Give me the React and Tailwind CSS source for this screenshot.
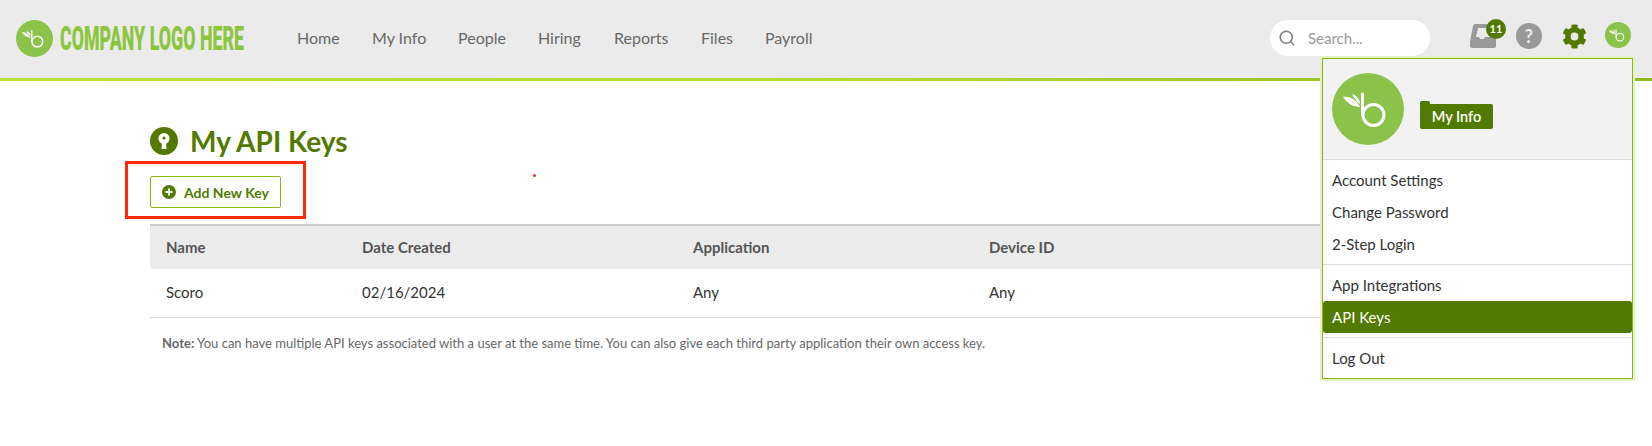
import React from 'react';
import { Search } from 'lucide-react';

const navLinks = [
  { label: 'Home', width: 'w-[75px]' },
  { label: 'My Info', width: 'w-[86px]' },
  { label: 'People', width: 'w-[80px]' },
  { label: 'Hiring', width: 'w-[76px]' },
  { label: 'Reports', width: 'w-[87px]' },
  { label: 'Files', width: 'w-[64px]' },
  { label: 'Payroll', width: 'w-[70px]' },
];

const BambooMark = ({ className }) => (
  <svg viewBox="0 0 72 72" className={className}>
    <circle cx="36" cy="36" r="36" fill="#8bc34a" />
    <path d="M30.5 21 V42" stroke="#fff" strokeWidth="3" strokeLinecap="round" fill="none" />
    <circle cx="41.5" cy="42" r="10.5" stroke="#fff" strokeWidth="3" fill="none" />
    <path d="M11 24 C17 23 24 26 28 34 C21 34 15 30 11 24 Z" fill="#fff" />
    <path d="M20 21 C24 22 28 26 28 31 C25 29 22 25 20 21 Z" fill="#fff" />
  </svg>
);

const Gear = () => (
  <svg viewBox="0 0 512 512" className="w-[25px] h-[25px]" fill="#527a00">
    <path d="M487 316l-42-25a190 190 0 000-70l42-25c5-3 7-9 5-14-11-35-30-67-54-93-4-4-10-5-15-2l-42 24a187 187 0 00-61-35V28c0-6-4-11-9-12-37-8-74-8-109 0-5 1-9 6-9 12v48a193 193 0 00-61 35L90 87c-5-3-11-2-15 2-24 26-43 58-54 93-2 5 0 11 5 14l42 25a190 190 0 000 70l-42 25c-5 3-7 9-5 14 11 35 30 67 54 93 4 4 10 5 15 2l42-24a187 187 0 0061 35v48c0 6 4 11 9 12 37 8 74 8 109 0 5-1 9-6 9-12v-48a193 193 0 0061-35l42 24c5 3 11 2 15-2 24-26 43-58 54-93 2-5 0-11-5-14zM256 336a80 80 0 110-160 80 80 0 010 160z" />
  </svg>
);

const MenuItem = ({ children, active }) => (
  <div
    className={`h-[32px] flex items-center pl-[9px] text-[15px] ${
      active ? 'bg-[#527a00] text-white rounded-[3px]' : 'text-[#333333]'
    }`}
  >
    {children}
  </div>
);

const App = () => {
  return (
    <div className="relative w-[1652px] h-[446px] overflow-hidden bg-white font-['Lato',sans-serif]">
      {/* Top bar */}
      <header className="h-[78px] bg-[#ebebeb] flex items-start">
        <div className="ml-[16px] mt-[20px] w-[281px] flex items-center shrink-0">
          <BambooMark className="w-[37px] h-[37px] shrink-0" />
          <span className="ml-[7px] text-[33px] leading-[37px] font-black text-[#8cc63f] font-['Roboto',sans-serif] whitespace-nowrap origin-left scale-x-[0.54]">
            COMPANY LOGO HERE
          </span>
        </div>
        <nav className="flex mt-[27px] text-[16px] leading-[22px] text-[#686868]">
          {navLinks.map((link) => (
            <span key={link.label} className={`${link.width} whitespace-nowrap`}>
              {link.label}
            </span>
          ))}
        </nav>
        <div className="ml-auto flex items-start">
          <div className="mt-[20px] w-[160px] h-[36px] bg-white rounded-full flex items-center pl-[8px] text-[15px] text-[#999999]">
            <Search size={18} strokeWidth={2.2} className="text-[#808080]" />
            <span className="ml-[12px]">Search...</span>
          </div>
          <div className="relative ml-[40px] mt-[24px] w-[26px] h-[24px]">
            <svg viewBox="0 0 26 24" className="w-[26px] h-[24px]" fill="#999999">
              <path d="M5 0 H17 V4 H8 L6 13 H9 C10 16 14 16 15 13 H26 V22 A2 2 0 0 1 24 24 H2 A2 2 0 0 1 0 22 V18 L3 2 A3 3 0 0 1 5 0 Z" />
            </svg>
            <span className="absolute -top-[5px] left-[16px] w-[20px] h-[20px] rounded-full bg-[#527a00] text-white text-[11px] font-bold flex items-center justify-center">
              11
            </span>
          </div>
          <div className="ml-[20px] mt-[23px] w-[26px] h-[26px] rounded-full bg-[#999999] text-[#ebebeb] text-[18px] font-bold flex items-center justify-center">
            ?
          </div>
          <div className="ml-[20px] mt-[24px]">
            <Gear />
          </div>
          <BambooMark className="ml-[18px] mt-[22px] mr-[21px] w-[26px] h-[26px]" />
        </div>
      </header>
      <div className="h-[3px] bg-gradient-to-r from-[#b9e03f] via-[#b3da38] via-50% to-[#8fb81e]" />

      {/* Page content */}
      <main className="pl-[150px] pr-[150px] pt-[46px]">
        <div className="flex items-center h-[28px]">
          <svg viewBox="0 0 28 28" className="w-[28px] h-[28px]">
            <circle cx="14" cy="14" r="14" fill="#527a00" />
            <circle cx="14" cy="11.5" r="5.5" fill="#fff" />
            <path d="M12.2 13 H15.8 L16.5 22 H11.5 Z" fill="#fff" />
            <circle cx="14" cy="11" r="1.5" fill="#527a00" />
          </svg>
          <h1 className="ml-[12px] text-[28px] font-bold text-[#527a00] leading-none">My API Keys</h1>
        </div>

        <button className="mt-[21px] w-[131px] h-[32px] border border-[#8ab516] rounded-[2px] flex items-center pl-[11px] text-[14px] font-bold text-[#527a00]">
          <svg viewBox="0 0 14 14" className="w-[14px] h-[14px]">
            <circle cx="7" cy="7" r="7" fill="#527a00" />
            <path d="M7 3.5 V10.5 M3.5 7 H10.5" stroke="#fff" strokeWidth="2" />
          </svg>
          <span className="ml-[8px]">Add New Key</span>
        </button>

        <div className="mt-[16px] border-t-2 border-[#cccccc]">
          <div className="h-[43px] bg-[#ebebeb] rounded-b-[2px] flex items-center text-[15px] font-bold text-[#555555]">
            <span className="w-[212px] pl-[16px]">Name</span>
            <span className="w-[331px]">Date Created</span>
            <span className="w-[296px]">Application</span>
            <span>Device ID</span>
          </div>
          <div className="h-[49px] pb-[1px] border-b border-[#dddddd] flex items-center text-[15px] text-[#333333]">
            <span className="w-[212px] pl-[16px]">Scoro</span>
            <span className="w-[331px]">02/16/2024</span>
            <span className="w-[296px]">Any</span>
            <span>Any</span>
          </div>
        </div>

        <p className="mt-[17px] pl-[12px] text-[13px] leading-[16px] text-[#686868]">
          <b>Note:</b> You can have multiple API keys associated with a user at the same time. You can also give each third party application their own access key.
        </p>
      </main>

      {/* Red annotation */}
      <div className="absolute left-[125px] top-[161px] w-[181px] h-[58px] border-[3px] border-[#ff2a0a]" />
      <div className="absolute left-[533px] top-[174px] w-[3px] h-[3px] rounded-full bg-[#ff2a0a]" />

      {/* Account dropdown */}
      <div className="absolute left-[1322px] top-[58px] w-[311px] h-[321px] bg-white border-[1.5px] border-[#8ab516] shadow-[0_0_0_2px_#e6f2c4]">
        <div className="h-[101px] bg-[#f2f2f2] border-b border-[#dddddd] flex items-start">
          <BambooMark className="ml-[9px] mt-[14px] w-[72px] h-[72px]" />
          <div className="relative ml-[16px] mt-[45px] w-[73px] h-[25px] bg-[#527a00] rounded-[2px] text-white text-[14.5px] font-semibold flex items-center justify-center">
            <span className="absolute -top-[3px] left-0 w-[10px] h-[4px] bg-[#527a00] rounded-t-[2px]" />
            My Info
          </div>
        </div>
        <div className="pt-[4px] pb-[4px] border-b border-[#dddddd]">
          <MenuItem>Account Settings</MenuItem>
          <MenuItem>Change Password</MenuItem>
          <MenuItem>2-Step Login</MenuItem>
        </div>
        <div className="pt-[4px] pb-[4px] border-b border-[#dddddd]">
          <MenuItem>App Integrations</MenuItem>
          <MenuItem active>API Keys</MenuItem>
        </div>
        <div className="pt-[4px]">
          <MenuItem>Log Out</MenuItem>
        </div>
      </div>
    </div>
  );
};

export default App;
